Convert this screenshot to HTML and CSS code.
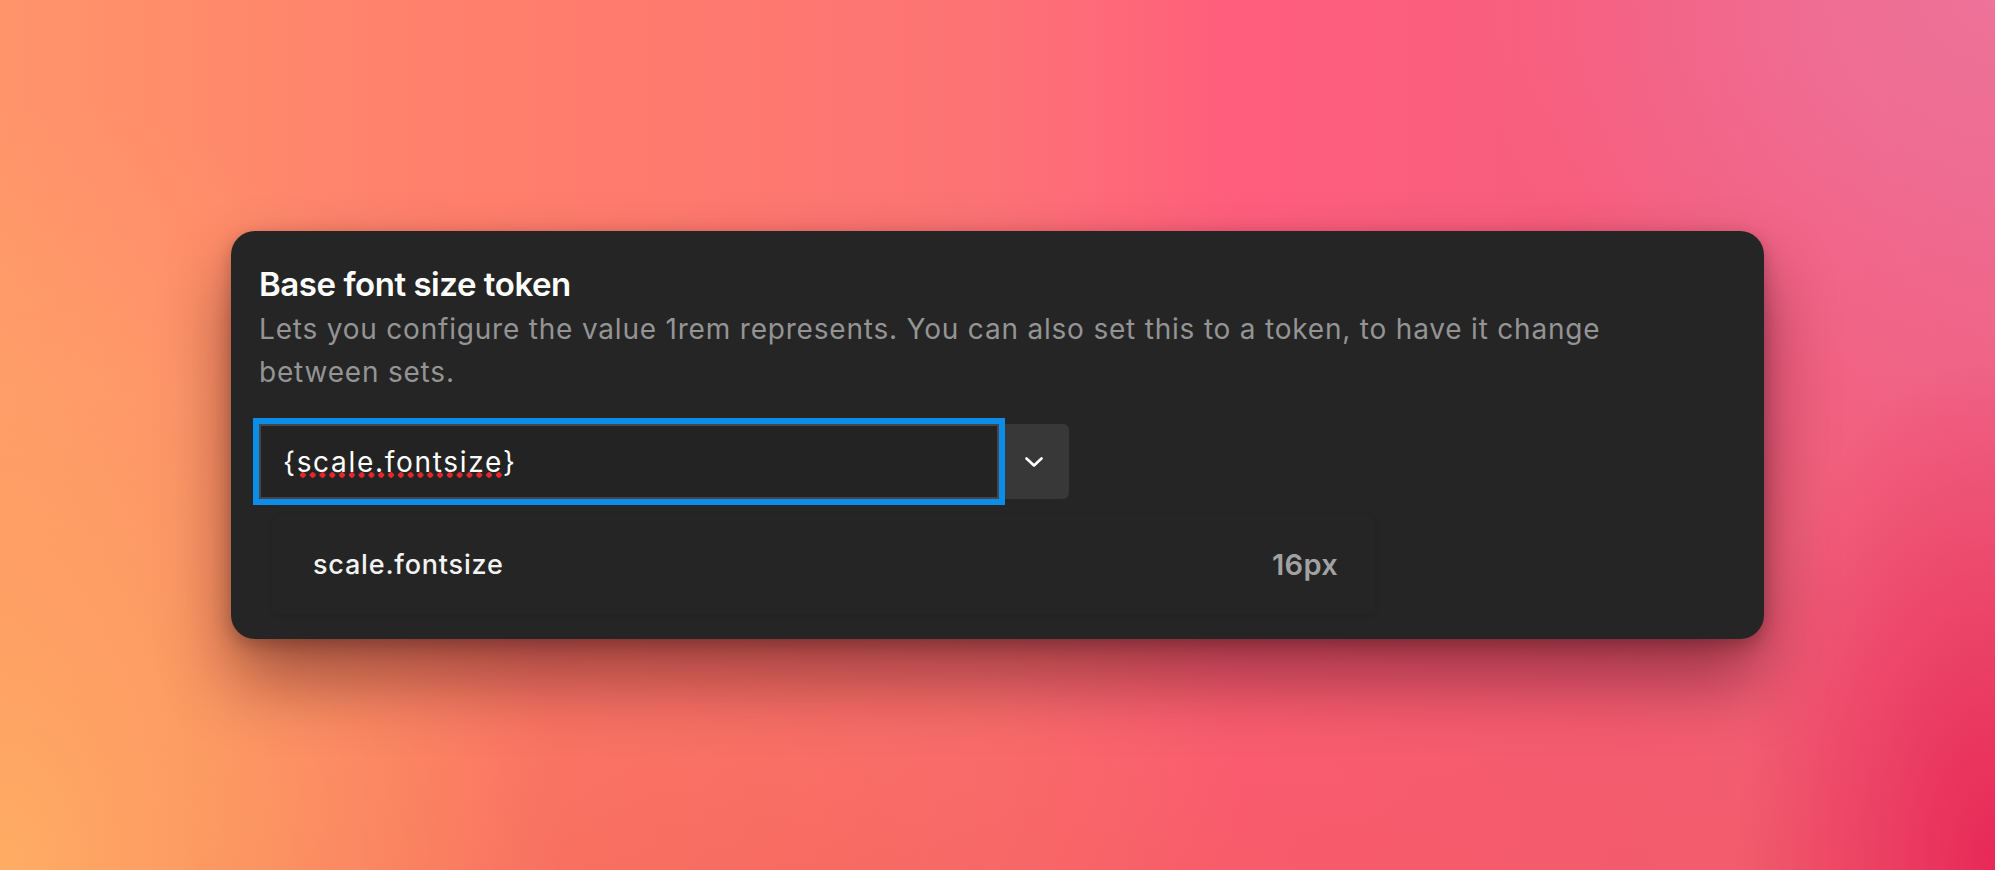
FILE: index.html
```html
<!DOCTYPE html>
<html lang="en">
<head>
<meta charset="utf-8">
<title>Base font size token</title>
<link rel="stylesheet" href="styles.css">
</head>
<body>
<main class="stage">
  <section class="card">
    <h1 class="title">Base font size token</h1>
    <p class="desc">Lets you configure the value 1rem represents. You can also set this to a token, to have it change between sets.</p>
    <div class="field-row">
      <div class="field"><span class="brace">{</span><span class="misspelled">scale.fontsize</span><span class="brace">}</span></div>
      <button class="toggle" type="button" aria-label="Open token list">
        <svg width="18" height="10" viewBox="0 0 18 10" fill="none"><path d="M1.5 1.5 L9 8.5 L16.5 1.5" stroke="#ffffff" stroke-width="2.6" stroke-linecap="round" stroke-linejoin="round"/></svg>
      </button>
    </div>
    <ul class="list">
      <li class="item"><span class="item-name">scale.fontsize</span><span class="item-value">16px</span></li>
    </ul>
  </section>
</main>
</body>
</html>
```
FILE: styles.css
```css
html, body {
  margin: 0;
  padding: 0;
}

body {
  font-family: Inter, "Noto Sans", "Liberation Sans", sans-serif;
  background:
    radial-gradient(ellipse 260px 520px at 100% 100%, rgba(232, 40, 88, 1) 0%, rgba(232, 40, 88, 0) 100%),
    radial-gradient(ellipse 560px 780px at 0% 100%, rgba(255, 172, 100, 1) 0%, rgba(255, 172, 100, 0) 100%),
    radial-gradient(ellipse 520px 420px at 100% 0%, rgba(238, 114, 154, 1) 0%, rgba(238, 114, 154, 0) 100%),
    linear-gradient(to bottom, rgba(240, 90, 70, 0) 45%, rgba(236, 86, 72, 0.35) 100%),
    linear-gradient(90deg, #ff946a 0%, #ff806c 22%, #fe786f 38%, #fd7276 50%, #ff5e7c 62%, #f75d7d 80%, #ef6385 100%);
}

.stage {
  width: 100vw;
  height: 100vh;
  display: flex;
  align-items: center;
  justify-content: center;
}

.card {
  width: 1533px;
  box-sizing: border-box;
  padding: 33px 28px 25px 28px;
  background: #252525;
  border-radius: 24px;
  box-shadow: 0 40px 70px rgba(40, 0, 10, 0.45), 0 6px 18px rgba(0, 0, 0, 0.25);
}

.title {
  margin: 0;
  font-size: 33px;
  line-height: 40px;
  font-weight: 600;
  letter-spacing: -0.45px;
  color: #ffffff;
}

.desc {
  margin: 4px 0 0 0;
  max-width: 1400px;
  font-size: 28px;
  line-height: 43px;
  font-weight: 400;
  letter-spacing: 0.8px;
  color: #949494;
}

.field-row {
  margin-top: 30px;
  display: flex;
  align-items: stretch;
  height: 75px;
}

.field {
  position: relative;
  z-index: 1;
  width: 740px;
  box-sizing: border-box;
  display: flex;
  align-items: center;
  padding: 0 22px;
  background: #232323;
  border: 2px solid #464646;
  box-shadow: 0 0 0 6px #0b8de8;
  font-size: 28px;
  letter-spacing: 1.7px;
  color: #ffffff;
}

.misspelled {
  background-image: radial-gradient(circle, #e8262c 0, #e8262c 2.5px, rgba(232, 38, 44, 0) 3px);
  background-size: 9.8px 8px;
  background-repeat: repeat-x;
  background-position: 1px 100%;
}

.toggle {
  width: 70px;
  height: 75px;
  padding: 0;
  border: 0;
  background: #383838;
  border-radius: 0 6px 6px 0;
  display: flex;
  align-items: center;
  justify-content: center;
}

.list {
  list-style: none;
  margin: 16px 0 0 13px;
  padding: 0;
  width: 1103px;
  height: 99px;
  background: #252525;
  border-radius: 8px;
  box-shadow: 0 1px 6px rgba(0, 0, 0, 0.07);
}

.item {
  height: 100%;
  display: flex;
  align-items: center;
  justify-content: space-between;
  padding: 0 37px 0 41px;
}

.item-name {
  font-size: 27px;
  font-weight: 500;
  letter-spacing: 0.8px;
  color: #f3f3f3;
}

.item-value {
  font-size: 29px;
  font-weight: 600;
  letter-spacing: 0.3px;
  color: #a2a2a2;
}
```
